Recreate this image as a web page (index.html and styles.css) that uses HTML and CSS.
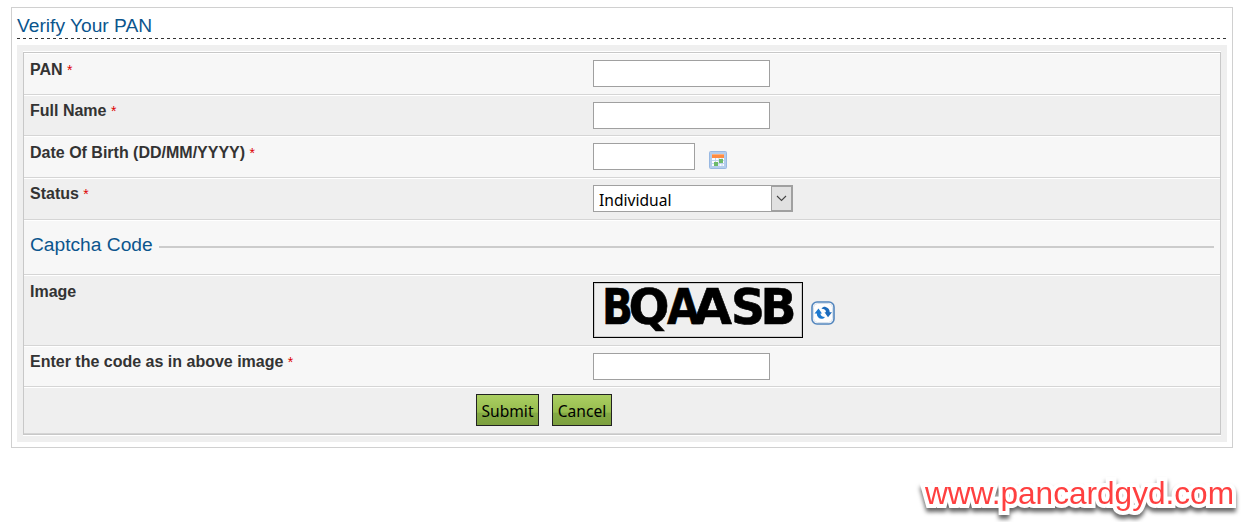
FILE: index.html
```html
<!DOCTYPE html>
<html lang="en">
<head>
    <meta charset="UTF-8">
    <meta name="viewport" content="width=device-width, initial-scale=1.0">
    <title>Verify Your PAN</title>
    <link rel="stylesheet" href="styles.css">
</head>
<body>

    <div class="container">
        <h2 class="title">Verify Your PAN</h2>

        <div class="panel">
            <form class="form-table">
                <div class="row">
                    <label for="pan">PAN <span class="required">*</span></label>
                    <input type="text" id="pan">
                </div>
                <div class="row alt short">
                    <label for="fullName">Full Name <span class="required">*</span></label>
                    <input type="text" id="fullName">
                </div>
                <div class="row">
                    <label for="dob">Date Of Birth (DD/MM/YYYY) <span class="required">*</span></label>
                    <input type="text" id="dob" class="date">
                    <svg class="calendar" width="18" height="18" viewBox="0 0 18 18">
                        <rect x="0.5" y="0.5" width="17" height="17" rx="1" fill="#b4cdec" stroke="#98b8e2"/>
                        <rect x="3" y="3" width="12" height="12" fill="#fbfdff"/>
                        <path d="M3 9.5h12M3 12.5h12M6.5 7v8M10 7v8M13 7v8" stroke="#c0d4ee"/>
                        <rect x="3" y="3" width="12" height="4" fill="#ff8c42"/>
                        <rect x="3" y="3" width="12" height="1" fill="#ffb07a"/>
                        <rect x="5" y="11" width="4" height="4" fill="#6dba6b"/>
                        <rect x="10" y="8" width="4" height="4" fill="#6dba6b"/>
                    </svg>
                </div>
                <div class="row alt raised">
                    <label for="status">Status <span class="required">*</span></label>
                    <div class="select" id="status">
                        <span class="value">Individual</span>
                        <span class="arrow">
                            <svg width="11" height="7" viewBox="0 0 11 7"><path d="M1 1l4.500 4.500L10 1" fill="none" stroke="#444" stroke-width="1.1"/></svg>
                        </span>
                    </div>
                </div>
                <div class="row section">
                    <h3>Captcha Code</h3>
                    <span class="line"></span>
                </div>
                <div class="row alt image">
                    <label>Image</label>
                    <!-- Captcha letters, each with its own width -->
                    <svg class="captcha" width="208" height="54" viewBox="0 0 208 54">
                        <text x="8" y="41" textLength="31" lengthAdjust="spacingAndGlyphs">B</text>
                        <text x="34.500" y="41" textLength="41" lengthAdjust="spacingAndGlyphs">Q</text>
                        <text x="73" y="41" textLength="33" lengthAdjust="spacingAndGlyphs">A</text>
                        <text x="99" y="41" textLength="39" lengthAdjust="spacingAndGlyphs">A</text>
                        <text x="137" y="41" textLength="34" lengthAdjust="spacingAndGlyphs">S</text>
                        <text x="166.500" y="41" textLength="36" lengthAdjust="spacingAndGlyphs">B</text>
                    </svg>
                    <svg class="refresh" width="24" height="24" viewBox="0 0 24 24">
                        <rect x="1" y="1" width="22" height="22" rx="5" fill="#fdfdfd" stroke="#5285bd" stroke-width="1.6"/>
                        <rect x="2.500" y="2.500" width="19" height="19" rx="4" fill="none" stroke="#d5e0ec"/>
                        <path d="M3.500 12.500L7.500 7.500l3.500 5H9.500c0 2 1.500 3.500 4.500 3.500-1 1.500-2.500 2-4 1.800-2.500-.5-4.200-2.500-4.200-5.300z" fill="#1b78cf"/>
                        <path d="M21 11.200l-4 5-3.500-5H15c0-2-1.500-3.500-4.500-3.500 1-1.500 2.500-2 4-1.800 2.500.5 4.200 2.500 4.200 5.300z" fill="#1b6abc"/>
                    </svg>
                </div>
                <div class="row short">
                    <label for="code">Enter the code as in above image <span class="required">*</span></label>
                    <input type="text" id="code">
                </div>
                <div class="row alt buttons">
                    <button type="button" class="submit">Submit</button>
                    <button type="button" class="cancel">Cancel</button>
                </div>
            </form>
        </div>
    </div>

    <footer>www.pancardgyd.com</footer>

</body>
</html>
```
FILE: styles.css
```css
* {
    margin: 0;
    padding: 0;
    box-sizing: border-box;
}

body {
    font-family: "Liberation Sans", Arial, sans-serif;
    background-color: #fff;
    padding: 7px 25px 0 11px;
    height: 522px;
    overflow: hidden;
}

.container {
    height: 441px;
    border: 1px solid #d0d0d0;
    padding: 0 5px;
}

.title {
    height: 31px;
    margin-bottom: 6px;
    padding-top: 7px;
    font-size: 19.2px;
    font-weight: normal;
    line-height: 22px;
    color: #0b558d;
    background: repeating-linear-gradient(to right, #333 0, #333 3px, transparent 3px, transparent 6px) left bottom / 100% 1px no-repeat;
}

.panel {
    height: 397px;
    padding: 7px 6px 6px;
    background-color: #efefef;
}

.form-table {
    border: 1px solid #c8c8c8;
    box-shadow: 0 -1px #fff, 0 1px #fff;
}

.row {
    display: flex;
    align-items: flex-start;
    height: 42px;
    padding: 6px 6px 0;
    background-color: #f7f7f7;
    border-top: 1px solid #fff;
    border-bottom: 1px solid #d5d5d5;
}

.row.alt {
    background-color: #efefef;
}

.row.short {
    height: 41px;
}

label {
    width: 563px;
    font-size: 16px;
    font-weight: bold;
    line-height: 20px;
    color: #333;
}

.short label,
.raised label {
    line-height: 18px;
}

.required {
    font-size: 14px;
    font-weight: normal;
    color: #d00;
}

input {
    width: 177px;
    height: 27px;
    border: 1px solid #a0a0a0;
    background-color: #fff;
}

input.date {
    width: 102px;
    margin-right: 14px;
}

.calendar {
    margin-top: 8px;
}

.select {
    display: flex;
    width: 200px;
    height: 27px;
    border: 1px solid #a0a0a0;
    background-color: #fff;
    font-family: "Noto Sans", sans-serif;
    font-size: 15.6px;
    line-height: 28px;
    color: #000;
}

.select .value {
    flex: 1;
    padding-left: 5px;
}

.select .arrow {
    display: flex;
    align-items: center;
    justify-content: center;
    width: 21px;
    border: 1px solid #a0a0a0;
    background-color: #e1e1e1;
}

/* Captcha section */
.row.section {
    height: 55px;
    padding-top: 13px;
}

.section h3 {
    font-size: 19.2px;
    font-weight: normal;
    line-height: 22px;
    color: #0b558d;
}

.section .line {
    flex: 1;
    height: 2px;
    margin: 12px 0 0 6px;
    background-color: #ccc;
}

.row.image {
    height: 71px;
}

.captcha {
    width: 210px;
    height: 56px;
    border: 1px solid #000;
    box-shadow: inset 0 0 0 1px #ccc;
    font-family: "DejaVu Sans", sans-serif;
    font-size: 49px;
    font-weight: bold;
    stroke: #000;
    stroke-width: 0.6px;
}

.refresh {
    margin: 19px 0 0 8px;
}

/* Buttons */
.row.buttons {
    height: 47px;
    padding-left: 452px;
    gap: 13px;
}

button {
    height: 32px;
    padding-top: 2px;
    border: 1px solid #222;
    background: linear-gradient(to bottom, #abcf62 0%, #96bc4e 58%, #84aa44 59%, #7da03f 100%);
    font-family: "Noto Sans", sans-serif;
    font-size: 15.6px;
    color: #000;
}

.submit {
    width: 63px;
}

.cancel {
    width: 60px;
}

footer {
    margin: 27px -1px 0 0;
    text-align: right;
    font-size: 31.6px;
    line-height: 36px;
    color: #ff4040;
    -webkit-text-stroke: 8px #fff;
    paint-order: stroke fill;
    filter: drop-shadow(0 4px 2px rgba(0, 0, 0, 0.6));
}
```
